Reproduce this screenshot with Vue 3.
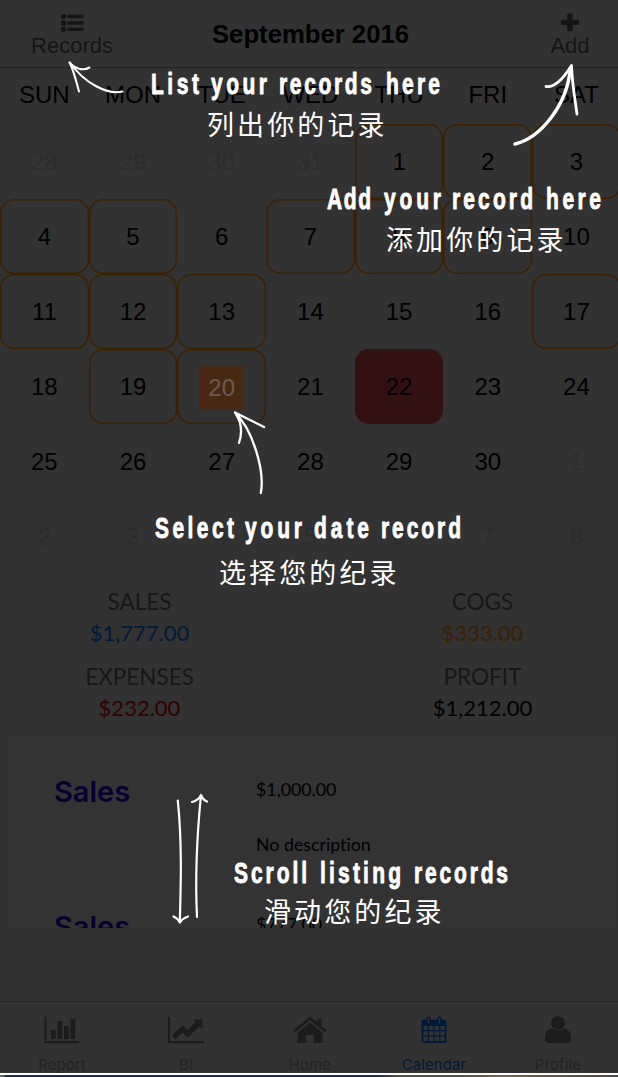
<script setup>
const weekdays = ['SUN', 'MON', 'TUE', 'WED', 'THU', 'FRI', 'SAT']

const marked = [1, 2, 3, 4, 5, 7, 8, 9, 11, 12, 13, 17, 19, 20]
const days = []
for (let i = 28; i <= 31; i++) days.push({ n: i, out: true })
for (let i = 1; i <= 30; i++) {
  days.push({ n: i, marked: marked.includes(i), today: i === 20, selected: i === 22 })
}
for (let i = 1; i <= 8; i++) days.push({ n: i, out: true })

const stats = [
  { label: 'SALES', value: '$1,777.00', tone: 'blue' },
  { label: 'COGS', value: '$333.00', tone: 'orange' },
  { label: 'EXPENSES', value: '$232.00', tone: 'red' },
  { label: 'PROFIT', value: '$1,212.00', tone: 'black' }
]

const records = [
  { type: 'Sales', amount: '$1,000.00', note: 'No description' },
  { type: 'Sales', amount: '$777.00', note: 'No description' }
]

const tabs = ['Report', 'BI', 'Home', 'Calendar', 'Profile']

const squeeze = 0.7
const hints = [
  { y: 94, words: [['List', 151, 48], ['your', 211, 56], ['records', 279, 93], ['here', 386, 54]], zh: '列出你的记录', zx: 207, zy: 135 },
  { y: 209, words: [['Add', 327, 44], ['your', 384, 57], ['record', 452, 81], ['here', 546, 55]], zh: '添加你的记录', zx: 386, zy: 250 },
  { y: 538, words: [['Select', 155, 79], ['your', 245, 57], ['date', 314, 55], ['record', 381, 80]], zh: '选择您的纪录', zx: 219, zy: 583 },
  { y: 883, words: [['Scroll', 234, 73], ['listing', 320, 81], ['records', 414, 94]], zh: '滑动您的纪录', zx: 264, zy: 922 }
]
</script>

<template>
  <div class="screen">
    <header class="bar">
      <div class="action left">
        <svg width="24" height="20" viewBox="0 0 24 20">
          <g fill="#151515">
            <circle cx="3.5" cy="4.300" r="2.600" /><circle cx="3.5" cy="10.900" r="2.600" /><circle cx="3.5" cy="17.300" r="2.600" />
            <rect x="7.500" y="2.700" width="16" height="3.400" /><rect x="7.500" y="9.200" width="16" height="3.400" /><rect x="7.500" y="15.600" width="16" height="3.400" />
          </g>
        </svg>
        <span>Records</span>
      </div>
      <h1>September 2016</h1>
      <div class="action right">
        <svg width="24" height="20" viewBox="0 0 24 20">
          <path fill="#151515" d="M10.500 1.500h3q1.200 0 1.200 1.200v5h5q1.200 0 1.200 1.200v3q0 1.200-1.200 1.200h-5v5q0 1.200-1.200 1.200h-3q-1.200 0-1.200-1.200v-5h-5q-1.200 0-1.200-1.200v-3q0-1.200 1.200-1.200h5v-5q0-1.200 1.200-1.200z" />
        </svg>
        <span>Add</span>
      </div>
    </header>

    <div class="week">
      <span v-for="d in weekdays" :key="d">{{ d }}</span>
    </div>

    <div class="month">
      <div v-for="(d, i) in days" :key="i" class="cell" :class="{ out: d.out, marked: d.marked, selected: d.selected }">
        <span :class="{ today: d.today }">{{ d.n }}</span>
      </div>
    </div>

    <section class="stats">
      <div v-for="s in stats" :key="s.label" class="stat">
        <span class="label">{{ s.label }}</span>
        <span class="value" :class="s.tone">{{ s.value }}</span>
      </div>
    </section>

    <section class="list">
      <article v-for="(r, i) in records" :key="i" class="record">
        <strong>{{ r.type }}</strong>
        <div class="detail">
          <span>{{ r.amount }}</span>
          <span>{{ r.note }}</span>
        </div>
      </article>
    </section>

    <nav class="tabs">
      <div v-for="t in tabs" :key="t" class="tab" :class="{ active: t === 'Calendar' }">
        <svg width="38" height="30" viewBox="0 0 38 30" fill="currentColor">
          <g v-if="t === 'Report'">
            <path d="M1.500 1h2v24h32.500v2.300H1.500z" />
            <rect x="8" y="14" width="4.600" height="9" /><rect x="14.500" y="5" width="4.600" height="18" /><rect x="21" y="10" width="4.600" height="13" /><rect x="27.500" y="3" width="4.600" height="20" />
          </g>
          <g v-else-if="t === 'BI'">
            <path d="M1 1h2v24h34v2.300H1z" />
            <path d="M5 19.500 15.500 9l5 5 7.800-7.800L26 3.500h9.500V13l-2.800-2.800L20.500 21.500l-5-5-7.300 7z" />
          </g>
          <g v-else-if="t === 'Home'">
            <path d="M19 .5 2 14.300l2 2.200L19 4.300l15 12.200 2-2.200-5.500-4.600V2.500h-4.300v3.700z" />
            <path d="M19 6.500 6.500 16.700V27h8.700v-8h7.600v8h8.700V16.700z" />
          </g>
          <path v-else-if="t === 'Calendar'" fill-rule="evenodd" d="M9 3.500h2.500V2q0-1.500 2-1.500t2 1.500v1.500h7V2q0-1.500 2-1.500t2 1.500v1.500H29q2.500 0 2.500 2.500v18.500q0 2.500-2.500 2.500H9q-2.500 0-2.500-2.500V6Q6.500 3.500 9 3.500zM8.500 10v4h4.300v-4zM14 10v4h4.500v-4zM19.700 10v4h4.500v-4zM25.400 10v4h4.100v-4zM8.500 15.200v4.100h4.300v-4.100zM14 15.200v4.100h4.500v-4.100zM19.700 15.200v4.100h4.500v-4.100zM25.400 15.200v4.100h4.100v-4.100zM8.500 20.500v4.500h4.300v-4.500zM14 20.500v4.500h4.500v-4.500zM19.700 20.500v4.500h4.500v-4.500zM25.400 20.500v4.500h4.100v-4.500zM12.900 2v5.500h1.200V2zM23.900 2v5.500h1.200V2z" />
          <g v-else>
            <circle cx="19" cy="7.200" r="6.900" />
            <path d="M13 12.500q6 4.500 12 0Q32 13.500 32 22.500q0 4.500-4 4.500H10.500q-4.500 0-4.500-4.500Q6 13.500 13 12.500z" />
          </g>
        </svg>
        <span>{{ t }}</span>
      </div>
    </nav>
    <div class="edge"></div>
    <div class="strip"></div>

    <svg class="guide" width="618" height="1077" viewBox="0 0 618 1077">
      <g fill="none" stroke="#fff" stroke-linecap="round" stroke-linejoin="round">
        <path stroke-width="2" d="M122.500 91.500C107 95 84 83 70 62.500M79 91.500C76 81 74 71 69.500 62.500C75 69 83 71 89.500 67.500" />
        <path stroke-width="3.400" d="M515 144C540 138 567 106 570.500 68" />
        <path stroke-width="2.800" d="M546 86.500C556 88 565 76 571.500 65.500C572 82 575 100 577 114" />
        <path stroke-width="2.300" d="M260.800 493C265 471 253 430 235 412.500M239 443C243 431 241 421 235 412.500L264 427" />
        <path stroke-width="2.200" d="M177.800 800.500C182 842 181 880 179.800 922.500M173.500 916.500Q178 918.500 179.800 922.500Q183 918 188 916.500M197 917C195 876 197 835 201 795M192 802Q198.500 800.500 201 795Q203 800 207 801.500" />
      </g>
      <g v-for="h in hints" :key="h.y" fill="#fff">
        <g class="marker" :transform="`scale(${squeeze} 1)`">
          <text v-for="w in h.words" :key="w[0]" :x="w[1] / squeeze" :y="h.y" :textLength="w[2] / squeeze" lengthAdjust="spacing">{{ w[0] }}</text>
        </g>
        <text class="zh" :x="h.zx" :y="h.zy" textLength="177.500" lengthAdjust="spacing">{{ h.zh }}</text>
      </g>
    </svg>
  </div>
</template>

<style>
html, body { margin: 0; background: #323232; overflow: hidden; }
</style>

<style scoped>
.screen {
  position: relative;
  display: flex;
  flex-direction: column;
  width: 618px;
  height: 1077px;
  overflow: hidden;
  background: #323232;
  color: #000;
  font-family: "Liberation Sans", sans-serif;
}
.bar {
  box-sizing: border-box;
  display: grid;
  grid-template-columns: 144px 1fr 96px;
  height: 68px;
  border-bottom: 1px solid #232323;
}
.bar h1 {
  margin: 0 45px 0 0;
  font-size: 25.7px;
  line-height: 68px;
  text-align: center;
  white-space: nowrap;
}
.action {
  display: flex;
  flex-direction: column;
  align-items: center;
  padding-top: 12px;
  color: #151515;
  font-size: 22px;
  line-height: 26px;
}
.action span { margin-top: 1px; }
.week, .month {
  display: grid;
  grid-template-columns: repeat(7, 88.7px);
  font-size: 24px;
  text-align: center;
}
.week { height: 56px; line-height: 54px; }
.month { grid-template-rows: repeat(6, 75px); flex: none; }
.cell {
  box-sizing: border-box;
  display: flex;
  align-items: center;
  justify-content: center;
  padding-top: 1px;
  border-radius: 14px;
}
.cell.out { color: #2d2d2d; }
.cell.marked { box-shadow: inset 0 0 0 1.500px #3e2100; }
.cell.selected { background: #331111; }
.today {
  width: 45px;
  border-radius: 3px;
  background: #492812;
  color: #6a5c53;
  line-height: 45px;
}
.stats {
  display: grid;
  grid-template-columns: 343px 343px;
  grid-template-rows: 74.5px 74.5px;
  height: 149px;
  padding-top: 12px;
  margin-left: -32px;
  font: 22.500px/31px Lato, sans-serif;
}
.stat { display: flex; flex-direction: column; align-items: center; }
.label { color: #171717; }
.value { font-size: 22px; }
.blue { color: #001a3a; }
.orange { color: #3c2000; }
.red { color: #330000; }
.black { color: #000; }
.list { height: 193px; margin: 0 8px 0 12px; overflow: hidden; background: #333; }
.record {
  display: grid;
  grid-template-columns: 202px 1fr;
  height: 135px;
  padding-left: 42px;
}
.record strong { color: #050030; font: 600 29px/114px Inter, sans-serif; }
.detail {
  display: flex;
  flex-direction: column;
  padding-top: 27px;
  font: 17.800px/55px Lato, sans-serif;
  font-variant-ligatures: none;
}
.tabs {
  box-sizing: border-box;
  display: grid;
  grid-template-columns: repeat(5, 124px);
  height: 72px;
  margin-top: 73px;
  border-top: 1px solid #222;
  color: #1c1c1c;
}
.tab { display: flex; flex-direction: column; align-items: center; padding-top: 14px; }
.tab span { margin-top: 9px; color: #232323; font: 14.800px/20px Inter, sans-serif; letter-spacing: .2px; }
.tab.active, .tab.active span { color: #001a3a; }
.edge { height: 2px; background: #fff; }
.strip { height: 2px; background: linear-gradient(90deg, #5d6c70 0 4px, #1c2e48 5px 375px, #55534d 400px 460px, #776344 500px, #4d4a47); }
.guide { position: absolute; inset: 0; }
.marker { font: bold 30px "Liberation Sans", sans-serif; stroke: #fff; stroke-width: .9px; stroke-linejoin: round; }
.zh { font: 27px "Noto Sans CJK SC", sans-serif; }
</style>
